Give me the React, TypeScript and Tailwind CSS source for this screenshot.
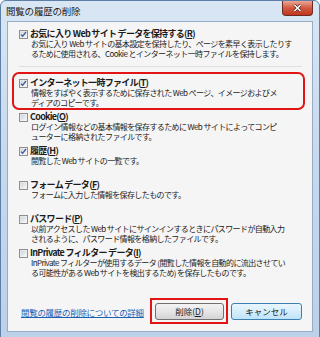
import type { ReactNode } from 'react';

interface HistoryItem {
  label: ReactNode;
  lines: string[];
  checked: boolean;
  highlight?: boolean;
}

const items: HistoryItem[] = [
  {
    label: <>インターネット一時ファイル(<u>T</u>)</>,
    lines: ['情報をすばやく表示するために保存された Web ページ、イメージおよびメ', 'ディアのコピーです。'],
    checked: true,
    highlight: true,
  },
  {
    label: <>Cookie(<u>O</u>)</>,
    lines: ['ログイン情報などの基本情報を保存するために Web サイトによってコンピ', 'ューターに格納されたファイルです。'],
    checked: false,
  },
  {
    label: <>履歴(<u>H</u>)</>,
    lines: ['閲覧した Web サイトの一覧です。'],
    checked: true,
  },
  {
    label: <>フォーム データ(<u>F</u>)</>,
    lines: ['フォームに入力した情報を保存したものです。'],
    checked: false,
  },
  {
    label: <>パスワード(<u>P</u>)</>,
    lines: ['以前アクセスした Web サイトにサインインするときにパスワードが自動入力', 'されるように、パスワード情報を格納したファイルです。'],
    checked: false,
  },
  {
    label: <>InPrivate フィルター データ(<u>I</u>)</>,
    lines: ['InPrivate フィルターが使用するデータ (閲覧した情報を自動的に流出させてい', 'る可能性がある Web サイトを検出するため) を保存したものです。'],
    checked: false,
  },
];

const CheckBox = ({ checked }: { checked: boolean }) => (
  <svg width="9" height="9" viewBox="0 0 9 9" className="shrink-0">
    <defs>
      <linearGradient id="cbfill" x1="0" y1="0" x2="1" y2="1">
        <stop offset="0" stopColor="#cfd3d8" />
        <stop offset="1" stopColor="#f6f7f9" />
      </linearGradient>
    </defs>
    <rect x="0.5" y="0.5" width="8" height="8" fill="#f4f4f4" stroke="#8e8f8f" />
    <rect x="1.5" y="1.5" width="6" height="6" fill="url(#cbfill)" />
    {checked && (
      <path d="M2 4.6l1.6 1.7L7 2" fill="none" stroke="#3d5a99" strokeWidth="1.3" />
    )}
  </svg>
);

const Item = ({ item }: { item: HistoryItem }) => (
  <div className="relative flex flex-col h-[30px]">
    <div className="flex items-center h-[10px] gap-[2px]">
      <CheckBox checked={item.checked} />
      <span className="font-bold text-[9px] leading-[10px] tracking-[-0.7px] whitespace-nowrap">{item.label}</span>
    </div>
    <div className="pl-[12px] text-[8px] leading-[10px] tracking-[-0.6px] whitespace-nowrap">
      {item.lines.map((line) => (
        <div key={line}>{line}</div>
      ))}
    </div>
    {/* red annotation box */}
    {item.highlight && (
      <div className="absolute top-[-6px] left-[-7px] w-[293px] h-[38px] border-2 border-[#e21414] rounded-[7px]" />
    )}
  </div>
);

const App = () => {
  return (
    <div className="w-[320px] h-[337px] overflow-hidden font-['Noto_Sans_CJK_JP',sans-serif] text-[#1b1b1b]">
      <div className="flex flex-col w-[320px] h-[340px] rounded-t-[6px] border border-[#5d7fa5] bg-linear-to-b from-[#d9e6f4] via-[#c6d8ee] to-[#bcd1ea]">
        {/* title bar */}
        <div className="flex justify-between h-[20px]">
          <span className="pl-[5px] pt-[4px] text-[9.5px] leading-[12px] tracking-[-0.2px] text-[#222]">閲覧の履歴の削除</span>
          <div className="flex items-center justify-center w-[31px] h-[15px] mr-[6px] rounded-b-[4px] border border-t-0 border-[#6e2b22] bg-linear-to-b from-[#e9a696] via-[#d2583f] to-[#bf3520]">
            <svg width="9" height="8" viewBox="0 0 9 8">
              <path d="M1.5 1l6 6M7.5 1l-6 6" stroke="#3a1510" strokeWidth="2.6" />
              <path d="M1.5 1l6 6M7.5 1l-6 6" stroke="#ffffff" strokeWidth="1.6" />
            </svg>
          </div>
        </div>

        {/* client area */}
        <div className="flex flex-col mx-[6px] h-[311px] border border-[#97acc6] bg-[#f5f5f5] pl-[11px] pr-[10px] pt-[7px]">
          <div className="flex flex-col h-[30px]">
            <div className="flex items-center h-[10px] gap-[2px]">
              <CheckBox checked />
              <span className="font-bold text-[9px] leading-[10px] tracking-[-0.7px] whitespace-nowrap">
                お気に入り Web サイト データを保持する(<u>R</u>)
              </span>
            </div>
            <div className="pl-[12px] text-[8px] leading-[10px] tracking-[-0.6px] whitespace-nowrap">
              <div>お気に入り Web サイトの基本設定を保持したり、ページを素早く表示したりす</div>
              <div>るために使用される、Cookie とインターネット一時ファイルを保持します。</div>
            </div>
          </div>

          <div className="mt-[7px] h-px bg-[#dcdfe3]" />

          <div className="flex flex-col gap-[4px] mt-[11px]">
            {items.map((item, i) => (
              <Item key={i} item={item} />
            ))}
          </div>

          <div className="flex items-center mt-[25px]">
            <span className="ml-[2px] text-[8.5px] leading-[10px] tracking-[-0.3px] text-[#1a5fb4] underline whitespace-nowrap">
              閲覧の履歴の削除についての詳細
            </span>
            <div className="flex-1" />
            <div className="flex gap-[7px]">
              <div className="relative">
                <button className="flex items-center justify-center w-[69px] h-[17px] rounded-[3px] border border-[#707070] bg-linear-to-b from-[#f3f3f3] via-[#e6e6e6] to-[#d4d4d4] text-[8.5px] leading-none">
                  削除(<u>D</u>)
                </button>
                {/* red annotation box */}
                <div className="absolute top-[-5px] left-[-5px] w-[78px] h-[26px] border-2 border-[#e21414]" />
              </div>
              <button className="flex items-center justify-center w-[71px] h-[17px] rounded-[3px] border border-[#3c7fb1] bg-linear-to-b from-[#eaf6fd] via-[#d6eefc] to-[#bde4fa] text-[8.5px] leading-none">
                キャンセル
              </button>
            </div>
          </div>
        </div>
      </div>
    </div>
  );
};

export default App;
